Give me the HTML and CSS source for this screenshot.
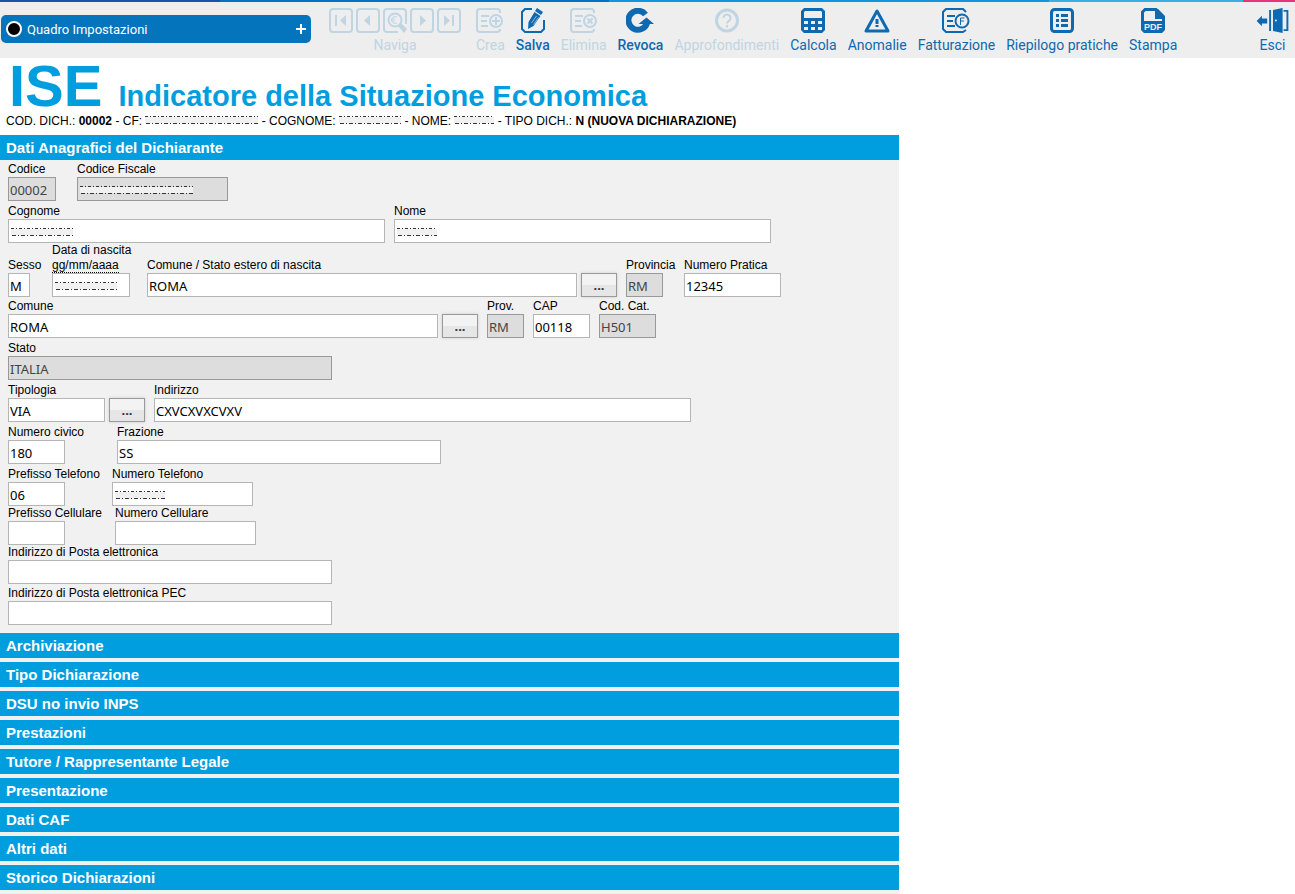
FILE: index.html
```html
<!DOCTYPE html>
<html lang="it">
<head>
<meta charset="utf-8">
<title>ISE</title>
<link rel="stylesheet" href="styles.css">
</head>
<body>
<div class="stripe"></div>
<header class="toolbar">
  <button class="panel-toggle" type="button">
    <span class="dot"></span>
    <span class="panel-name">Quadro Impostazioni</span>
    <svg width="10" height="10" viewBox="0 0 10 10"><path d="M5 0v10M0 5h10" stroke="#fff" stroke-width="2"/></svg>
  </button>
  <nav class="tools">
    <div class="tool tool-group off">
      <div class="nav-buttons">
        <button type="button" disabled aria-label="Primo"><svg class="icon" viewBox="0 0 24 25"><rect class="line" x="1" y="1" width="22" height="23" rx="3"/><path class="fill" d="M6 7h2v11H6zM17 7v11l-6-5.500z"/></svg></button>
        <button type="button" disabled aria-label="Precedente"><svg class="icon" viewBox="0 0 24 25"><rect class="line" x="1" y="1" width="22" height="23" rx="3"/><path class="fill" d="M14 7v11l-6-5.500z"/></svg></button>
        <button type="button" disabled aria-label="Cerca"><svg class="icon" viewBox="0 0 24 25"><path class="line" d="M15 24H4a3 3 0 0 1-3-3V4a3 3 0 0 1 3-3h16a3 3 0 0 1 3 3v12"/><circle class="line" cx="12" cy="12" r="6.500"/><path class="line thin" d="M14 9a3.500 3.500 0 1 0 0 6M8 11h4M8 13h4"/><path class="fill" d="M15 18l3-3 6 6-3 4z"/></svg></button>
        <button type="button" disabled aria-label="Successivo"><svg class="icon" viewBox="0 0 24 25"><rect class="line" x="1" y="1" width="22" height="23" rx="3"/><path class="fill" d="M10 7v11l6-5.500z"/></svg></button>
        <button type="button" disabled aria-label="Ultimo"><svg class="icon" viewBox="0 0 24 25"><rect class="line" x="1" y="1" width="22" height="23" rx="3"/><path class="fill" d="M7 7v11l6-5.500zM15 7h2v11h-2z"/></svg></button>
      </div>
      <span>Naviga</span>
    </div>
    <button class="tool off" type="button" disabled>
      <svg class="icon wide" viewBox="0 0 28 25"><path class="line" d="M24 5V4a3 3 0 0 0-3-3H4a3 3 0 0 0-3 3v17a3 3 0 0 0 3 3h17a3 3 0 0 0 3-3"/><path class="line" d="M5 8h8M5 13h6M5 18h7"/><circle class="line" cx="20" cy="13" r="6"/><path class="line" d="M20 9v8M16 13h8"/></svg>
      <span>Crea</span>
    </button>
    <button class="tool strong" type="button">
      <svg class="icon" viewBox="0 0 24 25"><path class="line" d="M11 1H4L1 4v17l3 3h16l3-3v-9"/><path class="fill" d="M16 0l6 4-2 3-6-4zM13.500 4l6 4-7 10-5.500 3 .500-7z"/><path d="M15.500 8l-5 7M17.500 9.500l-5 7" stroke="#eee" stroke-width=".6"/></svg>
      <span>Salva</span>
    </button>
    <button class="tool off" type="button" disabled>
      <svg class="icon wide" viewBox="0 0 28 25"><path class="line" d="M24 5V4a3 3 0 0 0-3-3H4a3 3 0 0 0-3 3v17a3 3 0 0 0 3 3h17a3 3 0 0 0 3-3"/><path class="line" d="M5 8h8M5 13h6M5 18h7"/><circle class="line" cx="20" cy="13" r="6"/><path class="line" d="M17.500 10.500l5 5M22.500 10.500l-5 5"/></svg>
      <span>Elimina</span>
    </button>
    <button class="tool strong" type="button">
      <svg class="icon wide" viewBox="0 0 28 25"><path class="line heavy" d="M19.500 6.500A9.500 9.500 0 1 0 21 15"/><path class="fill" d="M12.500 16L20.500 9.500l7.500 6.500z"/></svg>
      <span>Revoca</span>
    </button>
    <button class="tool off" type="button" disabled>
      <svg class="icon" viewBox="0 0 24 25"><circle class="line three" cx="12" cy="12.500" r="10.500"/><path class="line" d="M8.500 10a3.500 3.500 0 1 1 5.300 3c-1.200.8-1.800 1.200-1.800 2.500M12 17v2.500"/></svg>
      <span>Approfondimenti</span>
    </button>
    <button class="tool" type="button">
      <svg class="icon" viewBox="0 0 24 25"><path class="fill" fill-rule="evenodd" d="M3 0h18l3 3v19l-3 3H3l-3-3V3zM4 3L3 4v6h18V4l-1-1zM3 13v3h4v-3zM10 13v3h4v-3zM17 13v3h4v-3zM3 19v3h4v-3zM10 19v3h4v-3zM17 19v3h4v-3z"/></svg>
      <span>Calcola</span>
    </button>
    <button class="tool" type="button">
      <svg class="icon wide" viewBox="0 0 28 25"><path class="line three" stroke-linejoin="round" d="M14 3L3 23h22z"/><path class="line three" d="M14 11v5M14 17v2"/></svg>
      <span>Anomalie</span>
    </button>
    <button class="tool" type="button">
      <svg class="icon wide" viewBox="0 0 28 25"><path class="line" d="M24 4l-3-3H4L1 4v17l3 3h17l3-2"/><path class="line" d="M5 8h8M5 13h6M5 18h8"/><circle class="line" cx="20" cy="13" r="6.500"/><path class="line thin" d="M18.500 17V10h4M18.500 13h3.500"/></svg>
      <span>Fatturazione</span>
    </button>
    <button class="tool" type="button">
      <svg class="icon" viewBox="0 0 24 25"><rect class="line three" x="1.500" y="1.500" width="21" height="22" rx="3"/><path class="line three" d="M6 7.500h3M11 7.500h7M6 12.500h3M11 12.500h7M6 17.500h3M11 17.500h7"/></svg>
      <span>Riepilogo pratiche</span>
    </button>
    <button class="tool" type="button">
      <svg class="icon" viewBox="0 0 24 25"><path class="line three" d="M1.500 14V4l2.500-2.500h11L22.500 9v5"/><path class="fill" d="M14 1h3l7 7v3H14zM0 13h24v9l-3 3H3l-3-3z"/><text class="pdf" x="12" y="22" text-anchor="middle">PDF</text></svg>
      <span>Stampa</span>
    </button>
  </nav>
  <button class="tool exit" type="button">
    <svg class="icon door" viewBox="0 0 33 26"><path class="fill" d="M0 13.500L5.500 8v3H11v5H5.500v3zM13 2h2v22h-2zM17 2l10-2v26l-10-2z"/><path class="line" d="M28 3h4v20h-4"/><circle cx="20" cy="13" r="1" fill="#eee"/></svg>
    <span>Esci</span>
  </button>
</header>

<main class="page">
  <h1 class="title"><span class="acronym">ISE</span> Indicatore della Situazione Economica</h1>
  <p class="summary">COD. DICH.: <b>00002</b> - CF: <span class="masked mask-code"></span> - COGNOME: <span class="masked mask-surname"></span> - NOME: <span class="masked mask-name"></span> - TIPO DICH.: <b>N (NUOVA DICHIARAZIONE)</b></p>

  <div class="sections">
    <h2><button class="bar" type="button">Dati Anagrafici del Dichiarante</button></h2>
    <form class="form">
      <div class="row">
        <div class="field f-code"><label for="codice">Codice</label><input id="codice" class="w-code" value="00002" readonly></div>
        <div class="field"><label for="cf">Codice Fiscale</label><input id="cf" class="w-cf masked-input mask-code" readonly></div>
      </div>
      <div class="row">
        <div class="field"><label for="cognome">Cognome</label><input id="cognome" class="w-name masked-input mask-surname"></div>
        <div class="field"><label for="nome">Nome</label><input id="nome" class="w-name masked-input mask-name"></div>
      </div>
      <div class="row tight">
        <div class="field f-sex"><label for="sesso">Sesso</label><input id="sesso" class="w-sex" value="M"></div>
        <div class="field f-date"><label for="data">Data di nascita<br><span class="hint">gg/mm/aaaa</span></label><input id="data" class="w-date masked-input mask-surname"></div>
        <div class="field"><label for="nascita">Comune / Stato estero di nascita</label><div class="lookup"><input id="nascita" class="w-town" value="ROMA"><button type="button">...</button></div></div>
        <div class="field f-prov"><label for="provincia">Provincia</label><input id="provincia" class="w-prov" value="RM" readonly></div>
        <div class="field"><label for="pratica">Numero Pratica</label><input id="pratica" class="w-file" value="12345"></div>
      </div>
      <div class="row snug">
        <div class="field"><label for="comune">Comune</label><div class="lookup"><input id="comune" class="w-town" value="ROMA"><button type="button">...</button></div></div>
        <div class="field"><label for="prov">Prov.</label><input id="prov" class="w-prov" value="RM" readonly></div>
        <div class="field"><label for="cap">CAP</label><input id="cap" class="w-short" value="00118"></div>
        <div class="field"><label for="cat">Cod. Cat.</label><input id="cat" class="w-short" value="H501" readonly></div>
      </div>
      <div class="row">
        <div class="field"><label for="stato">Stato</label><input id="stato" class="w-long" value="ITALIA" readonly></div>
      </div>
      <div class="row">
        <div class="field"><label for="tipologia">Tipologia</label><div class="lookup"><input id="tipologia" class="w-file" value="VIA"><button type="button">...</button></div></div>
        <div class="field"><label for="indirizzo">Indirizzo</label><input id="indirizzo" class="w-address" value="CXVCXVXCVXV"></div>
      </div>
      <div class="row">
        <div class="field f-civic"><label for="civico">Numero civico</label><input id="civico" class="w-short" value="180"></div>
        <div class="field"><label for="frazione">Frazione</label><input id="frazione" class="w-long" value="SS"></div>
      </div>
      <div class="row">
        <div class="field f-tel"><label for="pretel">Prefisso Telefono</label><input id="pretel" class="w-short" value="06"></div>
        <div class="field"><label for="tel">Numero Telefono</label><input id="tel" class="w-phone masked-input mask-phone"></div>
      </div>
      <div class="row tight">
        <div class="field f-cell"><label for="precell">Prefisso Cellulare</label><input id="precell" class="w-short"></div>
        <div class="field"><label for="cell">Numero Cellulare</label><input id="cell" class="w-phone"></div>
      </div>
      <div class="row tight">
        <div class="field"><label for="mail">Indirizzo di Posta elettronica</label><input id="mail" class="w-long"></div>
      </div>
      <div class="row snug">
        <div class="field"><label for="pec">Indirizzo di Posta elettronica PEC</label><input id="pec" class="w-long"></div>
      </div>
    </form>
    <div class="bars">
      <h2><button class="bar" type="button">Archiviazione</button></h2>
      <h2><button class="bar" type="button">Tipo Dichiarazione</button></h2>
      <h2><button class="bar" type="button">DSU no invio INPS</button></h2>
      <h2><button class="bar" type="button">Prestazioni</button></h2>
      <h2><button class="bar" type="button">Tutore / Rappresentante Legale</button></h2>
      <h2><button class="bar" type="button">Presentazione</button></h2>
      <h2><button class="bar" type="button">Dati CAF</button></h2>
      <h2><button class="bar" type="button">Altri dati</button></h2>
      <h2><button class="bar" type="button">Storico Dichiarazioni</button></h2>
    </div>
  </div>
</main>
</body>
</html>
```

FILE: styles.css
```css
* { box-sizing: border-box; }
body { margin: 0; background: #fff; color: #000; font-family: "Liberation Sans", Arial, sans-serif; font-size: 12px; }
button { border: 0; padding: 0; background: none; font: inherit; color: inherit; }
h1, h2, p { margin: 0; }

.stripe { height: 2px; background: linear-gradient(90deg, #1655a5 17%, #0473bd 17% 47%, #1295d9 47% 81%, #3baee3 81% 96%, #e5357a 96%); }

.toolbar { display: flex; align-items: flex-start; height: 56px; padding: 6px 6px 0 1px; background: #eee; font-family: Roboto, sans-serif; color: #0f69b0; }
.panel-toggle { display: flex; align-items: center; width: 310px; height: 28px; margin-top: 7px; padding: 0 5px; border-radius: 5px; background: #0474bc; color: #fff; font-size: 13px; text-align: left; }
.dot { width: 16px; height: 16px; border: 2px solid #fff; border-radius: 50%; background: #000; }
.panel-name { flex: 1; margin-left: 5px; }
.tools { display: flex; gap: 11px; margin-left: 18px; }
.tool { display: flex; flex-direction: column; align-items: center; font-size: 14px; line-height: 18px; white-space: nowrap; }
.tool-group { margin-right: 4px; }
.tool span { margin-top: 3px; }
.strong { font-weight: 500; }
.off { color: #bfd5e3; }
.nav-buttons { display: flex; gap: 3px; }
.exit { margin-left: auto; }
.icon { display: block; width: 24px; height: 25px; }
.wide { width: 28px; }
.door { width: 33px; }
.fill { fill: currentColor; }
.line { fill: none; stroke: currentColor; stroke-width: 2; }
.three { stroke-width: 3; }
.thin { stroke-width: 1; }
.heavy { stroke-width: 6; }
.pdf { fill: #eee; font: bold 9px "Liberation Sans", sans-serif; }

.title { display: flex; align-items: baseline; gap: 16px; padding-left: 9px; color: #009ddf; font-size: 29px; line-height: 30px; white-space: nowrap; }
.acronym { font-size: 58px; line-height: 56px; }
.summary { padding: 0 6px 6px; line-height: 15px; }
.masked { display: inline-block; height: 9px; vertical-align: baseline; }
.masked, .masked-input {
  --ink: #333;
  background-image:
    repeating-linear-gradient(90deg, var(--ink) 0 3px, transparent 3px 5px, var(--ink) 5px 6px, transparent 6px 8px),
    linear-gradient(#f1f1f1, #f1f1f1),
    repeating-linear-gradient(90deg, transparent 0 1px, var(--ink) 1px 5px, transparent 5px 7px, var(--ink) 7px 8px, transparent 8px 9px);
  background-repeat: no-repeat;
  background-size: var(--mask) 1px, var(--mask) 6px, var(--mask) 1px;
  background-position: 0 0, 0 1px, 0 7px;
}
.masked { width: var(--mask); }
.masked-input { background-position: 2px 8px, 2px 9px, 2px 15px; }
.mask-code { --mask: 113px; }
.mask-surname { --mask: 62px; }
.mask-name { --mask: 40px; }
.mask-phone { --mask: 50px; }

.sections { max-width: 899px; background: #f1f1f1; }
.sections h2 { font-size: 15px; }
.bar { display: block; width: 100%; height: 25px; padding: 0 6px; background: #009ddf; color: #fff; font-weight: bold; text-align: left; }
.bars { display: grid; gap: 4px; padding-bottom: 4px; }

.form { padding: 2px 8px 8px; }
.row { display: flex; align-items: flex-end; gap: 9px; }
.row + .row { margin-top: 3px; }
.row + .tight { margin-top: 0; }
.row + .snug { margin-top: 2px; }
.field { display: flex; flex-direction: column; }
.field label { line-height: 15px; white-space: nowrap; }
.hint { border-bottom: 1px dotted #000; }
.field input { height: 24px; padding: 2px 1px 0; border: 1px solid #b5b5b5; border-radius: 0; background-color: #fff; font: 13px "Noto Sans", sans-serif; color: #000; }
.field input[readonly] { border-color: #999; background-color: #ddd; color: #444; }
.lookup { display: flex; gap: 4px; }
.lookup button { width: 36px; height: 24px; border: 1px solid #999; background: linear-gradient(#f3f3f3 50%, #e6e6e6 50%); box-shadow: 0 0 3px #ccc; font: bold 13px "Noto Sans", sans-serif; color: #333; }

.f-code { width: 60px; }
.f-sex { width: 35px; }
.f-date { width: 86px; }
.f-prov { width: 49px; }
.f-civic { width: 100px; }
.f-tel { width: 95px; }
.f-cell { width: 98px; }
.w-code { width: 48px; }
.w-cf { width: 151px; }
.w-name { width: 377px; }
.w-sex { width: 22px; }
.w-date { width: 78px; }
.w-town { width: 430px; }
.w-prov { width: 37px; }
.w-file { width: 97px; }
.w-short { width: 57px; }
.w-long { width: 324px; }
.w-phone { width: 141px; }
.w-address { width: 537px; }
```
